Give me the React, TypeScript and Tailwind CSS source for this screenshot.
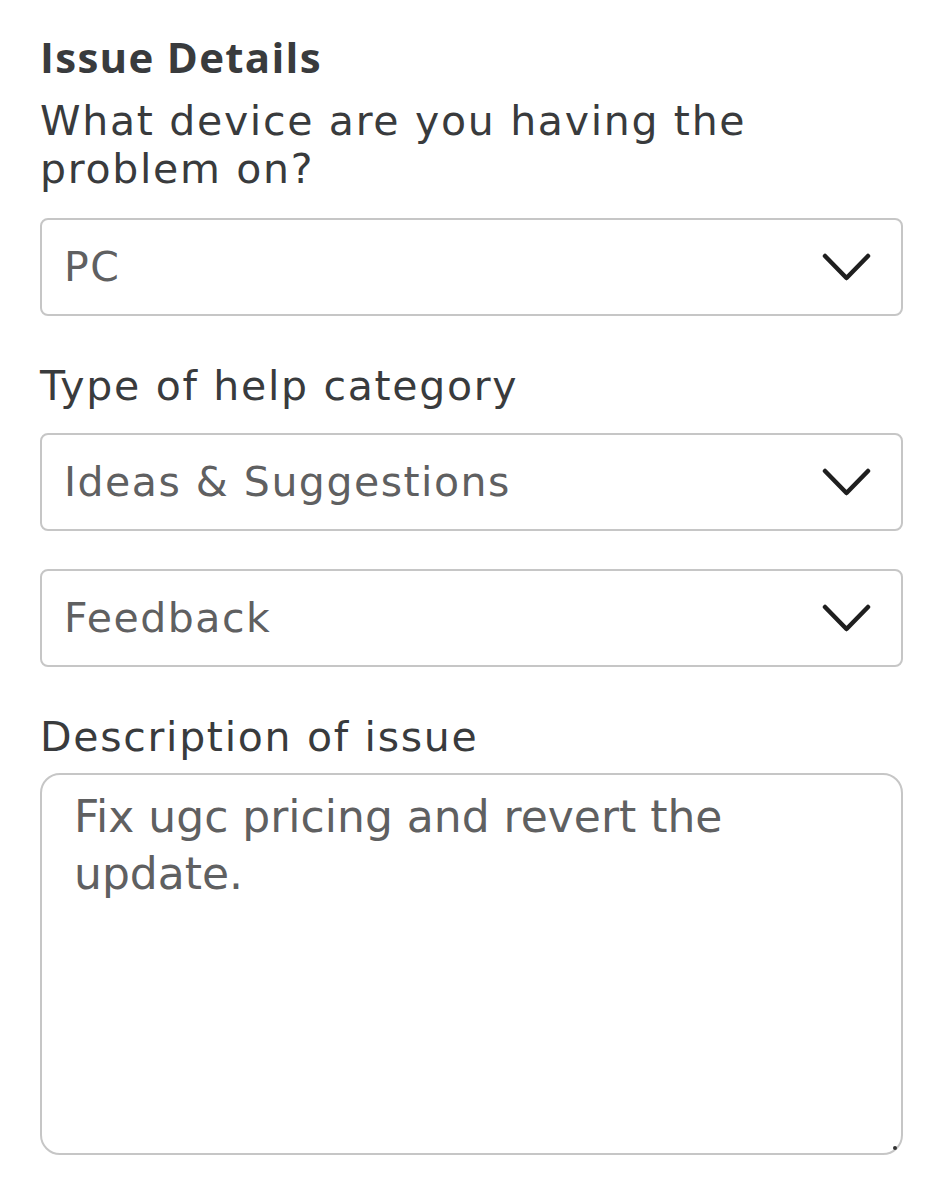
const font = { fontFamily: "'DejaVu Sans', 'Liberation Sans', sans-serif" };

function Chevron() {
  return (
    <svg width="49" height="29" viewBox="0 0 49 29" fill="none" className="shrink-0">
      <path d="M3 3 L24.5 25 L46 3" stroke="#1f1f1f" strokeWidth="4.5" strokeLinecap="round" strokeLinejoin="round" />
    </svg>
  );
}

function Select({ value, className = "" }: { value: string; className?: string }) {
  return (
    <div
      className={`flex h-[98px] items-center justify-between rounded-[8px] border-2 border-[#c6c6c6] bg-white pl-[22px] pr-[30px] ${className}`}
    >
      <span className="text-[41px] leading-[48px] tracking-[1.5px] text-[#5f6061]">{value}</span>
      <Chevron />
    </div>
  );
}

function Label({ children, className = "" }: { children: string; className?: string }) {
  return <p className={`text-[41px] leading-[48px] tracking-[1.7px] ${className}`}>{children}</p>;
}

export default function App() {
  return (
    <div className="min-h-[1200px] bg-white px-[40px] pt-[33px] text-[#393b3d]" style={font}>
      <h2
        className="text-[42px] font-bold leading-[48px] tracking-[1.3px]"
        style={{ fontFamily: "'Open Sans', 'Liberation Sans', sans-serif" }}
      >
        Issue Details
      </h2>
      <Label className="mt-[16px]">What device are you having the problem on?</Label>
      <Select value="PC" className="mt-[25px]" />

      <Label className="mt-[46px]">Type of help category</Label>
      <Select value="Ideas & Suggestions" className="mt-[23px]" />
      <Select value="Feedback" className="mt-[38px]" />

      <Label className="mt-[46px]">Description of issue</Label>
      <div className="relative mt-[12px] h-[382px] rounded-[20px] border-2 border-[#c6c6c6] bg-white px-[32px] pt-[13px]">
        <p className="text-[44px] leading-[57px] text-[#5f6061]">Fix ugc pricing and revert the update.</p>
        <span className="absolute bottom-[3px] right-[4px] h-[4px] w-[4px] rounded-full bg-[#333]" />
      </div>
    </div>
  );
}
